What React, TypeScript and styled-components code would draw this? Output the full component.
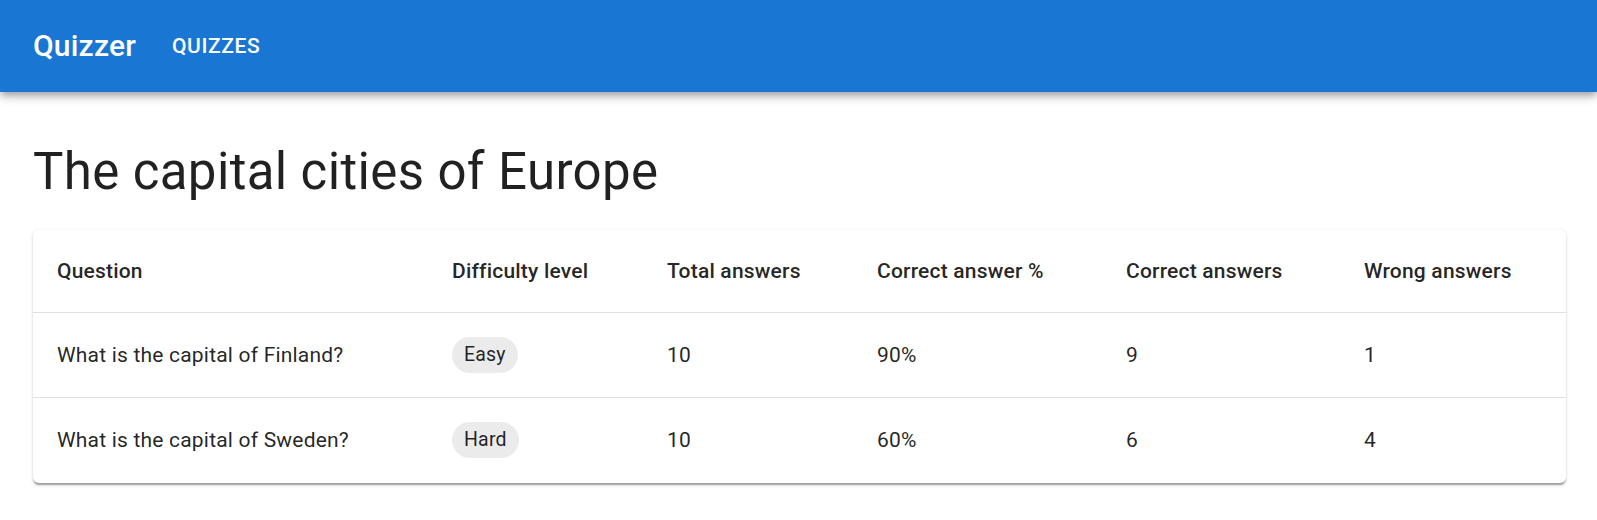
import React from "react";
import styled, { createGlobalStyle } from "styled-components";

const GlobalStyle = createGlobalStyle`
  html, body { margin: 0; padding: 0; background: #fff; }
  body { font-family: Roboto, "Noto Sans", Arial, sans-serif; color: rgba(0,0,0,0.87); }
  * { box-sizing: border-box; }
`;

const AppBar = styled.header`
  height: 92px;
  background: #1976d2;
  color: #fff;
  display: flex;
  align-items: center;
  padding: 0 33px;
  box-shadow: 0px 3px 6px -1.5px rgba(0,0,0,0.2), 0px 6px 7.5px 0px rgba(0,0,0,0.14), 0px 1.5px 15px 0px rgba(0,0,0,0.12);
  position: relative;
  z-index: 2;
`;

const Brand = styled.div`
  font-size: 30px;
  font-weight: 500;
  letter-spacing: 0.2px;
  line-height: 1.6;
  margin-right: 24px;
`;

const NavButton = styled.button`
  background: transparent;
  border: none;
  color: #fff;
  font-family: inherit;
  font-size: 21px;
  font-weight: 500;
  letter-spacing: 0.6px;
  text-transform: uppercase;
  padding: 9px 12px;
  line-height: 1.75;
  cursor: pointer;
`;

const Main = styled.main`
  padding: 49px 31px 40px 33px;
`;

const Title = styled.h1`
  margin: 0 0 26px;
  font-size: 51px;
  font-weight: 400;
  line-height: 1.235;
  letter-spacing: 0.37px;
  color: rgba(0,0,0,0.87);
`;

const Card = styled.div`
  background: #fff;
  border-radius: 6px;
  overflow: hidden;
  box-shadow: 0px 3px 1.5px -1.5px rgba(0,0,0,0.2), 0px 1.5px 1.5px 0px rgba(0,0,0,0.14), 0px 1.5px 4.5px 0px rgba(0,0,0,0.12);
`;

const Table = styled.table`
  width: 100%;
  border-collapse: collapse;
  table-layout: fixed;
`;

const Col = styled.col<{ $w: number }>`
  width: ${(p) => p.$w}px;
`;

const HeadCell = styled.th`
  text-align: left;
  font-size: 21px;
  font-weight: 500;
  line-height: 36px;
  letter-spacing: 0.2px;
  padding: 23px 24px 23px;
  border-bottom: 1px solid #e0e0e0;
  color: rgba(0,0,0,0.87);
`;

const Row = styled.tr<{ $last?: boolean }>`
  td { border-bottom: ${(p) => (p.$last ? "1px solid transparent" : "1px solid #e0e0e0")}; }
`;

const Cell = styled.td`
  font-size: 21px;
  font-weight: 400;
  line-height: 30px;
  letter-spacing: 0.2px;
  padding: 24px;
  height: 85px;
  vertical-align: middle;
  color: rgba(0,0,0,0.87);
`;

const Chip = styled.span`
  display: inline-flex;
  align-items: center;
  height: 36px;
  padding: 0 12px;
  border-radius: 18px;
  background: rgba(0,0,0,0.08);
  font-size: 19.5px;
  line-height: 1.5;
  color: rgba(0,0,0,0.87);
  vertical-align: middle;
`;

const columns = [
  { label: "Question", w: 395 },
  { label: "Difficulty level", w: 215 },
  { label: "Total answers", w: 210 },
  { label: "Correct answer %", w: 249 },
  { label: "Correct answers", w: 238 },
  { label: "Wrong answers", w: 226 },
];

const rows = [
  { q: "What is the capital of Finland?", level: "Easy", total: 10, pct: "90%", correct: 9, wrong: 1 },
  { q: "What is the capital of Sweden?", level: "Hard", total: 10, pct: "60%", correct: 6, wrong: 4 },
];

export default function App() {
  return (
    <>
      <GlobalStyle />
      <AppBar>
        <Brand>Quizzer</Brand>
        <NavButton>Quizzes</NavButton>
      </AppBar>
      <Main>
        <Title>The capital cities of Europe</Title>
        <Card>
          <Table>
            <colgroup>
              {columns.map((c) => (
                <Col key={c.label} $w={c.w} />
              ))}
            </colgroup>
            <thead>
              <tr>
                {columns.map((c) => (
                  <HeadCell key={c.label}>{c.label}</HeadCell>
                ))}
              </tr>
            </thead>
            <tbody>
              {rows.map((r, i) => (
                <Row key={r.q} $last={i === rows.length - 1}>
                  <Cell>{r.q}</Cell>
                  <Cell>
                    <Chip>{r.level}</Chip>
                  </Cell>
                  <Cell>{r.total}</Cell>
                  <Cell>{r.pct}</Cell>
                  <Cell>{r.correct}</Cell>
                  <Cell>{r.wrong}</Cell>
                </Row>
              ))}
            </tbody>
          </Table>
        </Card>
      </Main>
    </>
  );
}
